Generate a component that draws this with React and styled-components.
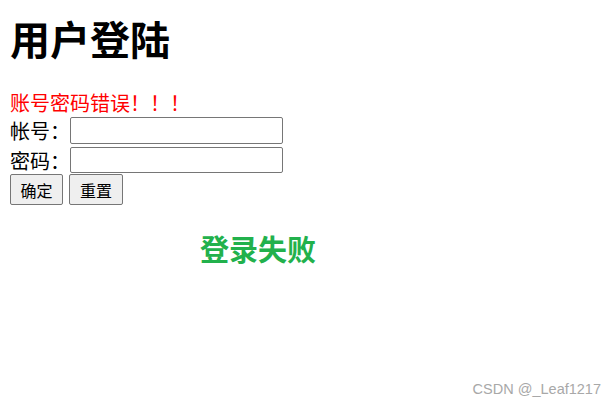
import React from "react";
import styled, { createGlobalStyle } from "styled-components";

const GlobalStyle = createGlobalStyle`
    html, body {
        margin: 0;
        padding: 0;
        background: #fff;
    }
    body {
        font-family: "Microsoft YaHei", "Noto Sans CJK SC", sans-serif;
    }
`;

const Page = styled.div`
    position: relative;
    width: 616px;
    height: 405px;
    padding: 0 10px;
    box-sizing: border-box;
    overflow: hidden;
`;

const Title = styled.h1`
    margin: 12px 0 0;
    font-size: 40px;
    line-height: 52px;
    font-weight: 700;
    color: #000;
`;

const ErrorMsg = styled.div`
    margin-top: 26px;
    font-size: 20px;
    line-height: 25px;
    color: red;
`;

const Form = styled.form`
    display: flex;
    flex-direction: column;
    gap: 3px;
    margin: 2px 0 0;
`;

const Row = styled.div`
    display: flex;
    align-items: center;
`;

const Label = styled.label`
    width: 60px;
    font-size: 20px;
    line-height: 25px;
    color: #000;
`;

const Input = styled.input`
    box-sizing: border-box;
    width: 213px;
    height: ${({ h }) => h || 27}px;
    margin: 0;
    border: 1px solid #767676;
    border-radius: 2px;
    padding: 1px 3px;
    font-size: 16px;
`;

const Buttons = styled.div`
    display: flex;
    gap: 6px;
    margin-top: -2px;
`;

const Button = styled.button`
    box-sizing: border-box;
    height: 31px;
    width: ${({ w }) => w}px;
    padding: 0;
    border: 1px solid #767676;
    border-radius: 2px;
    background: #efefef;
    color: #000;
    font-family: "Microsoft YaHei", "Noto Sans CJK SC", sans-serif;
    font-size: 16px;
`;

const Result = styled.div`
    margin-top: 23px;
    padding-left: 190px;
    font-size: 29px;
    line-height: 40px;
    font-weight: 700;
    color: #22b14c;
`;

const Watermark = styled.div`
    position: absolute;
    right: 15px;
    bottom: 8px;
    font-family: "Liberation Sans", Arial, sans-serif;
    font-size: 14.5px;
    color: #a8a8a8;
`;

export default function App() {
    return (
        <>
            <GlobalStyle />
            <Page>
                <Title>用户登陆</Title>
                <ErrorMsg>账号密码错误！！！</ErrorMsg>
                <Form onSubmit={(e) => e.preventDefault()}>
                    <Row>
                        <Label>帐号：</Label>
                        <Input type="text" />
                    </Row>
                    <Row>
                        <Label>密码：</Label>
                        <Input type="password" h={26} />
                    </Row>
                    <Buttons>
                        <Button w={53}>确定</Button>
                        <Button w={54} type="reset">重置</Button>
                    </Buttons>
                </Form>
                <Result>登录失败</Result>
                <Watermark>CSDN @_Leaf1217</Watermark>
            </Page>
        </>
    );
}
